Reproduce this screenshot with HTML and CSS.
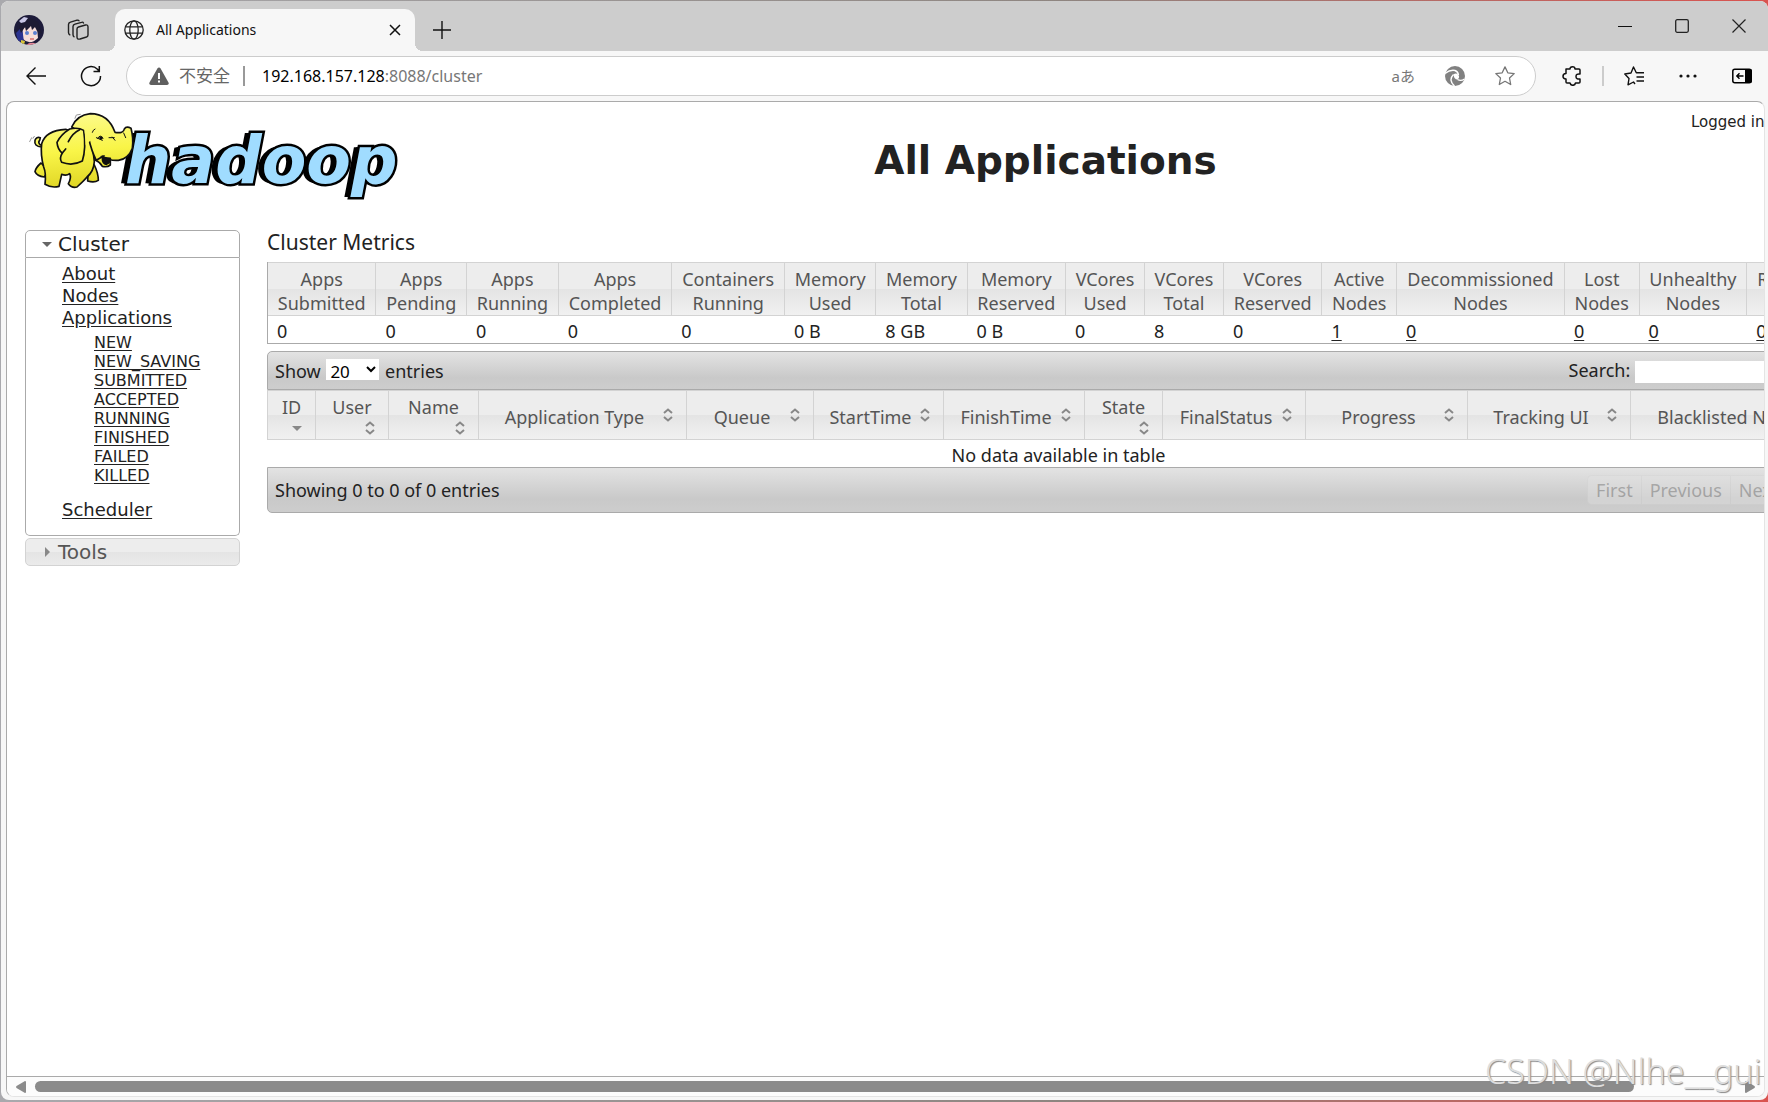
FILE: index.html
```html
<!DOCTYPE html>
<html lang="en">
<head>
    <meta charset="UTF-8" />
    <meta name="viewport" content="width=device-width, initial-scale=1" />
    <title>All Applications</title>
    <link rel="stylesheet" href="styles.css">
</head>
<body>
<div class="window">
    <div class="tabbar">
        <svg class="avatar" viewBox="0 0 30 30">
            <clipPath id="face"><circle cx="15" cy="15" r="15"/></clipPath>
            <g clip-path="url(#face)">
                <rect width="30" height="30" fill="#1d1b3a"/>
                <path d="M8 14Q15 8 23 13L24 23Q16 31 9 24Z" fill="#f6ddd9"/>
                <path d="M2 18L8 12L10 27L4 26Z" fill="#2b3390"/>
                <path d="M7 5Q15 1 24 7L28 19L23 16L21 12L18 15L17 11L12 16L11 12L7 18L5 12Z" fill="#1d1b33"/>
                <path d="M5 6L10 2L14 3L11 7L7 8Z" fill="#c9c7e6"/>
                <circle cx="13" cy="18" r="2" fill="#5b7fd0"/>
                <circle cx="21" cy="18" r="2" fill="#5b7fd0"/>
                <path d="M16 24h4" stroke="#d86a6a" stroke-width="1.4"/>
                <path d="M7 25l4 1l-1 4H7z" fill="#d8c43a"/>
                <path d="M12 30q5-4 11-1v2H12z" fill="#e88a9a"/>
            </g>
        </svg>
        <button class="icon-btn workspaces" aria-label="Workspaces">
            <svg width="22" height="22" viewBox="0 0 22 22" fill="none" stroke="#222" stroke-width="1.4" stroke-linejoin="round" stroke-linecap="round">
                <path d="M11.5 8L18.5 6Q21 5.500 21 8V16Q21 17.500 19.500 18L13 20Q10 20.700 10 18V10Q10 8.500 11.500 8Z"/>
                <path d="M16.500 4Q16 2.800 14.500 3.300L8 5.200Q6 5.800 6 7.500V15.500Q6 17 7 17.800"/>
                <path d="M12 1.800Q11.500 .8 10 1.200L3.500 3.200Q1.500 3.800 1.500 5.500V13.500Q1.500 15 2.800 15.800"/>
            </svg>
        </button>
        <div class="tab">
            <svg width="20" height="20" viewBox="0 0 20 20" fill="none" stroke="#222" stroke-width="1.3">
                <circle cx="10" cy="10" r="9.200"/>
                <ellipse cx="10" cy="10" rx="4.200" ry="9.200"/>
                <path d="M1.500 6.800H18.500M1.500 13.200H18.500"/>
            </svg>
            <span class="tab-title">All Applications</span>
            <button class="icon-btn" aria-label="Close tab">
                <svg width="12" height="12" viewBox="0 0 12 12" stroke="#111" stroke-width="1.500"><path d="M1 1L11 11M11 1L1 11"/></svg>
            </button>
        </div>
        <button class="icon-btn new-tab" aria-label="New tab">
            <svg width="18" height="18" viewBox="0 0 18 18" stroke="#111" stroke-width="1.400"><path d="M9 0V18M0 9H18"/></svg>
        </button>
        <div class="caption-buttons">
            <button class="icon-btn" aria-label="Minimize"><svg width="14" height="14" viewBox="0 0 14 14" stroke="#111"><path d="M0 7.500H14"/></svg></button>
            <button class="icon-btn" aria-label="Maximize"><svg width="14" height="14" viewBox="0 0 14 14" stroke="#222" fill="none" stroke-width="1.300"><rect x=".7" y=".7" width="12.600" height="12.600" rx="1.500"/></svg></button>
            <button class="icon-btn" aria-label="Close"><svg width="14" height="14" viewBox="0 0 14 14" stroke="#222" stroke-width="1.200"><path d="M.5 .5L13.500 13.500M13.500 .5L.5 13.500"/></svg></button>
        </div>
    </div>

    <div class="toolbar">
        <button class="icon-btn" aria-label="Back">
            <svg width="20" height="20" viewBox="0 0 20 20" fill="none" stroke="#111" stroke-width="1.400"><path d="M20 10H1M9.500 1.500L1 10L9.500 18.500"/></svg>
        </button>
        <button class="icon-btn refresh" aria-label="Refresh">
            <svg width="22" height="22" viewBox="0 0 22 22" fill="none" stroke="#111" stroke-width="1.500"><path d="M20.500 11A9.500 9.500 0 1 1 17.500 4.200L19 6M19.300 1V6.500H13.500"/></svg>
        </button>
        <div class="address">
            <svg width="20" height="18" viewBox="0 0 20 18"><path d="M10 .5Q11 .5 11.600 1.500L19.500 15.500Q20.300 18 18 18H2Q-.3 18 .5 15.500L8.400 1.500Q9 .5 10 .5Z" fill="#5f5f5f"/><path d="M10 6V12M10 13.500V15.500" stroke="#fff" stroke-width="2"/></svg>
            <span class="insecure">不安全</span>
            <span class="divider"></span>
            <span class="url">192.168.157.128<span class="path">:8088/cluster</span></span>
            <div class="address-icons">
                <span class="translate">aあ</span>
                <svg width="20" height="20" viewBox="0 0 20 20">
                    <circle cx="10" cy="10" r="10" fill="#818181"/>
                    <path d="M8.500 8.500Q11 6.500 13.500 9Q15 11.500 12.500 13.500Q9 13.500 8.500 8.500Z" fill="#fff"/>
                    <g fill="none" stroke="#fff" stroke-width="1.400">
                        <path d="M0 7.500Q5 3.500 10 4.500Q13 5.500 13.500 9"/>
                        <path d="M19.500 13Q16 15.500 12.500 13.500"/>
                        <path d="M9.500 20Q3 14 8.500 8.500"/>
                    </g>
                </svg>
                <svg width="20" height="20" viewBox="0 0 20 20" fill="none" stroke="#777" stroke-width="1.300" stroke-linejoin="round"><path d="M10 .9L12.800 6.800L19.200 7.600L14.500 12L15.700 18.500L10 15.300L4.300 18.500L5.500 12L.8 7.600L7.200 6.800Z"/></svg>
            </div>
        </div>
        <div class="toolbar-icons">
            <button class="icon-btn" aria-label="Extensions">
                <svg width="20" height="20" viewBox="0 0 20 20" fill="none" stroke="#111" stroke-width="1.500" stroke-linejoin="round"><path d="M4 3H8Q8 .8 10.500 .8T13 3H17Q18 3 18 4V8Q14 7.500 14 10.500T18 13V16Q18 17 17 17H13.500Q13 19.300 10.800 19.300T8 17H5Q4 17 4 16V13Q1 13 1 10.300T4 7.500Z"/></svg>
            </button>
            <span class="divider light"></span>
            <button class="icon-btn" aria-label="Favorites">
                <svg width="20" height="20" viewBox="0 0 20 20" fill="none" stroke="#111" stroke-width="1.400" stroke-linejoin="round"><path d="M11 18L9.500 16L4 18.800L5 12.500L.8 8L7 7L9.500 1L12.300 6.800H20M12.500 11H20M12.500 15H20"/></svg>
            </button>
            <button class="icon-btn wide" aria-label="Settings and more">
                <svg width="18" height="4" viewBox="0 0 18 4" fill="#111"><circle cx="2" cy="2" r="1.600"/><circle cx="9" cy="2" r="1.600"/><circle cx="16" cy="2" r="1.600"/></svg>
            </button>
            <button class="icon-btn wide" aria-label="Sidebar">
                <svg width="20" height="16" viewBox="0 0 20 16"><rect x=".8" y="1.300" width="18.400" height="13.400" rx="2" fill="none" stroke="#000" stroke-width="1.500"/><path d="M13 1H18Q20 1 20 3V13Q20 15 18 15H13Z"/><path d="M11.500 8H5M7.500 5.300L4.800 8L7.500 10.700" fill="none" stroke="#000" stroke-width="1.400"/></svg>
            </button>
        </div>
    </div>

    <div class="viewport">
        <div class="page">
            <div class="header">
                <a class="logo" href="#">
                    <svg width="112" height="86" viewBox="0 0 336 258">
                        <defs>
                            <linearGradient id="skin" gradientUnits="userSpaceOnUse" x1="120" y1="30" x2="140" y2="250">
                                <stop offset="0" stop-color="#fcfa8c"/>
                                <stop offset=".5" stop-color="#f9f548"/>
                                <stop offset="1" stop-color="#dfd524"/>
                            </linearGradient>
                        </defs>
                        <g fill="url(#skin)" stroke="#111" stroke-width="5" stroke-linejoin="round" stroke-linecap="round">
                            <path d="M50 126Q26 124 30 106Q34 94 46 98L44 106Q38 112 46 120L56 118Z"/>
                            <path d="M48 174Q32 188 30 200Q36 214 58 216L70 196Z"/>
                            <path d="M208 180Q220 205 220 226Q208 234 188 228L190 190Z"/>
                            <path d="M122 73Q62 76 50 116Q46 150 56 186Q64 205 60 238Q80 250 102 244L110 208Q124 214 134 206Q140 218 130 236Q140 250 156 246Q178 226 186 216Q206 200 208 170L200 100Z"/>
                            <path d="M206 150L212 166Q226 172 232 184Q246 188 256 180V156Z"/>
                            <path d="M140 66Q156 30 196 26Q250 26 270 82Q296 86 298 72Q304 62 318 70Q326 100 322 130Q310 162 280 166Q254 168 234 154L214 166Q200 140 190 96Z" />
                            <path d="M176 76Q160 66 134 72Q108 88 96 112Q98 134 112 144Q102 160 110 172Q142 184 172 168Q184 130 176 76Z"/>
                            <path d="M164 74Q142 84 130 110M112 144L122 132" fill="none"/>
                            <path d="M178 70L204 62L204 100L182 120Z" stroke="none"/>
                            <path d="M232 158Q232 176 244 178Q258 172 256 160Z" fill="#111"/>
                            <path d="M218 100Q226 86 234 100M214 98L232 106M202 82Q204 74 210 72M252 98H268M262 96L270 106M296 84L302 98M228 154L238 152" fill="none" stroke-width="3"/>
                            <circle cx="228" cy="99" r="3" fill="#111"/>
                            <path d="M14 110L20 98M24 100L28 94M150 40L154 30L166 28" fill="none" stroke="#999" stroke-width="3"/>
                        </g>
                    </svg>
                    <span class="logo-name">hadoop</span>
                </a>
                <h1>All Applications</h1>
                <div class="user">Logged in as: dr.who</div>
            </div>

            <div class="columns">
                <div class="nav">
                    <h3 class="nav-head active"><span class="arrow-down"></span>Cluster</h3>
                    <div class="nav-body">
                        <ul>
                            <li><a href="#">About</a></li>
                            <li><a href="#">Nodes</a></li>
                            <li><a href="#">Applications</a>
                                <ul class="states">
                                    <li><a href="#">NEW</a></li>
                                    <li><a href="#">NEW_SAVING</a></li>
                                    <li><a href="#">SUBMITTED</a></li>
                                    <li><a href="#">ACCEPTED</a></li>
                                    <li><a href="#">RUNNING</a></li>
                                    <li><a href="#">FINISHED</a></li>
                                    <li><a href="#">FAILED</a></li>
                                    <li><a href="#">KILLED</a></li>
                                </ul>
                            </li>
                            <li><a href="#">Scheduler</a></li>
                        </ul>
                    </div>
                    <h3 class="nav-head"><span class="arrow-right"></span>Tools</h3>
                </div>

                <div class="content">
                    <h2>Cluster Metrics</h2>
                    <table class="metrics">
                        <thead>
                            <tr>
                                <th>Apps<br>Submitted</th>
                                <th>Apps<br>Pending</th>
                                <th>Apps<br>Running</th>
                                <th>Apps<br>Completed</th>
                                <th>Containers<br>Running</th>
                                <th>Memory<br>Used</th>
                                <th>Memory<br>Total</th>
                                <th>Memory<br>Reserved</th>
                                <th>VCores<br>Used</th>
                                <th>VCores<br>Total</th>
                                <th>VCores<br>Reserved</th>
                                <th>Active<br>Nodes</th>
                                <th>Decommissioned<br>Nodes</th>
                                <th>Lost<br>Nodes</th>
                                <th>Unhealthy<br>Nodes</th>
                                <th>Rebooted<br>Nodes</th>
                            </tr>
                        </thead>
                        <tbody>
                            <tr>
                                <td>0</td>
                                <td>0</td>
                                <td>0</td>
                                <td>0</td>
                                <td>0</td>
                                <td>0 B</td>
                                <td>8 GB</td>
                                <td>0 B</td>
                                <td>0</td>
                                <td>8</td>
                                <td>0</td>
                                <td><a href="#">1</a></td>
                                <td><a href="#">0</a></td>
                                <td><a href="#">0</a></td>
                                <td><a href="#">0</a></td>
                                <td><a href="#">0</a></td>
                            </tr>
                        </tbody>
                    </table>

                    <div class="bar top">
                        <label>Show
                            <select>
                                <option>20</option>
                                <option>40</option>
                                <option>60</option>
                            </select>
                            entries</label>
                        <label>Search: <input type="text"></label>
                    </div>
                    <table class="apps">
                        <colgroup>
                            <col class="c-id"><col class="c-user"><col class="c-name"><col class="c-type"><col class="c-queue"><col class="c-start"><col class="c-finish"><col class="c-state"><col class="c-final"><col class="c-progress"><col class="c-tracking"><col class="c-nodes">
                        </colgroup>
                        <thead>
                            <tr>
                                <th><div class="sort stacked"><span>ID</span><i class="arrow-down"></i></div></th>
                                <th><div class="sort stacked"><span>User</span><svg class="carets" viewBox="0 0 10 14"><path d="M1 5L5 1.500L9 5M1 9L5 12.500L9 9"/></svg></div></th>
                                <th><div class="sort stacked"><span>Name</span><svg class="carets" viewBox="0 0 10 14"><path d="M1 5L5 1.500L9 5M1 9L5 12.500L9 9"/></svg></div></th>
                                <th><div class="sort"><span>Application Type</span><svg class="carets" viewBox="0 0 10 14"><path d="M1 5L5 1.500L9 5M1 9L5 12.500L9 9"/></svg></div></th>
                                <th><div class="sort"><span>Queue</span><svg class="carets" viewBox="0 0 10 14"><path d="M1 5L5 1.500L9 5M1 9L5 12.500L9 9"/></svg></div></th>
                                <th><div class="sort"><span>StartTime</span><svg class="carets" viewBox="0 0 10 14"><path d="M1 5L5 1.500L9 5M1 9L5 12.500L9 9"/></svg></div></th>
                                <th><div class="sort"><span>FinishTime</span><svg class="carets" viewBox="0 0 10 14"><path d="M1 5L5 1.500L9 5M1 9L5 12.500L9 9"/></svg></div></th>
                                <th><div class="sort stacked"><span>State</span><svg class="carets" viewBox="0 0 10 14"><path d="M1 5L5 1.500L9 5M1 9L5 12.500L9 9"/></svg></div></th>
                                <th><div class="sort"><span>FinalStatus</span><svg class="carets" viewBox="0 0 10 14"><path d="M1 5L5 1.500L9 5M1 9L5 12.500L9 9"/></svg></div></th>
                                <th><div class="sort"><span>Progress</span><svg class="carets" viewBox="0 0 10 14"><path d="M1 5L5 1.500L9 5M1 9L5 12.500L9 9"/></svg></div></th>
                                <th><div class="sort"><span>Tracking UI</span><svg class="carets" viewBox="0 0 10 14"><path d="M1 5L5 1.500L9 5M1 9L5 12.500L9 9"/></svg></div></th>
                                <th><div class="sort"><span>Blacklisted Nodes</span><svg class="carets" viewBox="0 0 10 14"><path d="M1 5L5 1.500L9 5M1 9L5 12.500L9 9"/></svg></div></th>
                            </tr>
                        </thead>
                        <tbody>
                            <tr><td colspan="12">No data available in table</td></tr>
                        </tbody>
                    </table>
                    <div class="bar bottom">
                        <span>Showing 0 to 0 of 0 entries</span>
                        <div class="pager">
                            <button disabled>First</button>
                            <button disabled>Previous</button>
                            <button disabled>Next</button>
                            <button disabled>Last</button>
                        </div>
                    </div>
                </div>
            </div>
        </div>
        <div class="scrollbar">
            <svg width="10" height="12" viewBox="0 0 10 12" fill="#8b8b8b"><path d="M9 0Q10 0 10 1V11Q10 12 9 12L.5 7Q-.3 6 .5 5Z"/></svg>
            <div class="track"><div class="thumb"></div></div>
            <svg width="10" height="12" viewBox="0 0 10 12" fill="#8b8b8b"><path d="M1 0Q0 0 0 1V11Q0 12 1 12L9.500 7Q10.300 6 9.500 5Z"/></svg>
        </div>
        <div class="watermark">CSDN @Nlhe__gui</div>
    </div>
</div>
</body>
</html>
```

FILE: styles.css
```css
* {
  box-sizing: border-box;
}
body {
  margin: 0;
  padding: 1px 0 2px 1px;
  height: 100vh;
  overflow: hidden;
  background: linear-gradient(90deg, #a9a9ad, #8e8580 60%, #d9534f);
  font-family: "Noto Sans", "Noto Sans CJK SC", sans-serif;
  font-size: 18px;
  line-height: 24px;
  color: #222;
}
a {
  color: #222;
  text-underline-offset: 2px;
}
.window {
  display: flex;
  flex-direction: column;
  height: 100%;
  background: #f7f7f7;
  border-radius: 8px;
  overflow: hidden;
}
.icon-btn {
  display: flex;
  align-items: center;
  justify-content: center;
  padding: 0;
  border: none;
  background: none;
}

/* tab strip */
.tabbar {
  display: flex;
  align-items: center;
  height: 50px;
  background: #cdcdcd;
}
.avatar {
  width: 30px;
  height: 30px;
  margin: 8px 23px 0 13px;
}
.workspaces {
  margin: 8px 26px 0 0;
}
.tab {
  position: relative;
  display: flex;
  align-items: center;
  align-self: flex-end;
  width: 300px;
  height: 42px;
  padding: 0 14px 0 9px;
  background: #f7f7f7;
  border-radius: 10px 10px 0 0;
}
.tab::before, .tab::after {
  content: "";
  position: absolute;
  bottom: 0;
  width: 8px;
  height: 8px;
}
.tab::before {
  left: -8px;
  background: radial-gradient(circle at 0 0, #cdcdcd 8px, #f7f7f7 8px);
}
.tab::after {
  right: -8px;
  background: radial-gradient(circle at 100% 0, #cdcdcd 8px, #f7f7f7 8px);
}
.tab-title {
  flex: 1;
  margin-left: 12px;
  font-size: 14px;
  color: #111;
}
.new-tab {
  margin: 8px 0 0 18px;
}
.caption-buttons {
  display: flex;
  margin-left: auto;
  padding-right: 1px;
}
.caption-buttons .icon-btn {
  width: 57px;
  height: 48px;
}

/* toolbar */
.toolbar {
  display: flex;
  align-items: center;
  height: 50px;
  padding: 0 16px 0 25px;
}
.refresh {
  margin: 0 24px 0 34px;
}
.address {
  display: flex;
  flex: 1;
  align-items: center;
  height: 40px;
  padding: 0 20px 0 22px;
  background: #fff;
  border: 1px solid #ccc;
  border-radius: 20px;
}
.insecure {
  margin: 0 13px 0 10px;
  font-size: 17px;
  color: #666;
}
.divider {
  width: 2px;
  height: 20px;
  background: #999;
}
.divider.light {
  background: #ccc;
}
.url {
  margin-left: 17px;
  font-size: 16px;
  color: #000;
}
.path {
  color: #777;
}
.address-icons {
  display: flex;
  align-items: center;
  gap: 30px;
  margin-left: auto;
}
.translate {
  font-size: 15px;
  line-height: 20px;
  color: #777;
}
.toolbar-icons {
  display: flex;
  align-items: center;
  gap: 20px;
  margin-left: 26px;
}
.wide {
  margin-left: 15px;
}

/* browser viewport */
.viewport {
  position: relative;
  display: flex;
  flex: 1;
  flex-direction: column;
  margin: 0 3px 3px 5px;
  background: #fff;
  border: 1px solid #aaa;
  border-right-color: #e4e4e4;
  border-bottom-color: #e4e4e4;
  border-radius: 8px;
  overflow: hidden;
}
.page {
  flex: 1;
  overflow: hidden;
  padding: 0 18px;
}
.scrollbar {
  display: flex;
  align-items: center;
  gap: 9px;
  height: 20px;
  padding: 0 9px;
  background: #fcfcfc;
  border-top: 1px solid #aaa;
}
.track {
  flex: 1;
}
.thumb {
  width: 94%;
  height: 11px;
  background: #8b8b8b;
  border-radius: 6px;
}
.watermark {
  position: absolute;
  left: calc(100% - 279px);
  bottom: 3px;
  font-size: 34px;
  line-height: 44px;
  font-weight: 300;
  white-space: nowrap;
  color: #ddd;
  text-shadow: 1px 1px 1px #888;
}

/* page header */
.header {
  display: flex;
  width: 1826px;
  height: 128px;
  font-family: "DejaVu Sans", sans-serif;
}
.logo {
  display: flex;
  width: 375px;
  padding-top: 3px;
  text-decoration: none;
}
.logo svg {
  flex: none;
  z-index: 1;
}
.logo-name {
  margin: 20px 0 0 -12px;
  font-size: 65px;
  line-height: 72px;
  font-weight: bold;
  font-style: italic;
  color: #a0dcff;
  paint-order: stroke;
  -webkit-text-stroke: 5px #000;
  text-shadow: -2px 0 #000, -4px 0 #000, -6px 0 #000;
}
h1 {
  flex: 1;
  margin: 35px 0 0;
  font-size: 39px;
  line-height: 48px;
  text-align: center;
}
.user {
  width: 160px;
  padding-top: 8px;
  font-size: 15px;
  white-space: nowrap;
}

/* navigation */
.columns {
  display: flex;
  gap: 27px;
}
.nav {
  flex: none;
  width: 215px;
  font-family: "DejaVu Sans", sans-serif;
}
.nav-head {
  display: flex;
  align-items: center;
  height: 28px;
  margin: 2px 0 0;
  padding-left: 16px;
  border: 1px solid #d3d3d3;
  border-radius: 5px;
  background: linear-gradient(#ededed 50%, #e4e4e4 50%, #ebebeb);
  font-size: 20px;
  font-weight: normal;
  color: #555;
}
.nav-head.active {
  margin: 0;
  border-color: #aaa;
  border-radius: 5px 5px 0 0;
  background: #fff;
  color: #222;
}
.arrow-down {
  width: 10px;
  margin-right: 6px;
  border: 5px solid transparent;
  border-top-color: #666;
  border-bottom-width: 0;
}
.arrow-right {
  margin: 0 8px 0 3px;
  border: 5px solid transparent;
  border-left-color: #888;
  border-right-width: 0;
}
.nav-body {
  padding: 5px 0 14px 36px;
  border: 1px solid #aaa;
  border-top: none;
  border-radius: 0 0 5px 5px;
}
.nav ul {
  margin: 0;
  padding: 0;
  list-style: none;
  line-height: 22px;
}
.nav .states {
  margin: 4px 0 14px 32px;
  font-size: 16px;
  line-height: 19px;
}

/* tables */
.content {
  flex: none;
  width: 1583px;
}
h2 {
  margin: 0 0 8px;
  font-size: 21px;
  line-height: 24px;
  font-weight: normal;
}
table {
  width: 100%;
  border-collapse: separate;
  border-spacing: 0;
}
th {
  border: 1px solid #d3d3d3;
  border-left: none;
  background: linear-gradient(#ededed 50%, #e4e4e4 50%, #f1f1f1);
  font-weight: normal;
  color: #555;
}
th:first-child {
  border-left: 1px solid #d3d3d3;
}
.metrics {
  margin-bottom: 7px;
  border-bottom: 1px solid #aaa;
  border-left: 1px solid #aaa;
}
.metrics th:first-child {
  border-left: none;
}
.metrics th {
  padding: 4px 9px 0;
}
.metrics td {
  padding: 3px 9px 0;
}
.bar {
  display: flex;
  align-items: center;
  justify-content: space-between;
  padding: 0 7px;
  border: 1px solid #aaa;
  background: linear-gradient(#e3e3e3, #c9c9c9 70%, #cdcdcd);
}
.bar.top {
  height: 39px;
  border-radius: 5px 5px 0 0;
}
.bar.bottom {
  height: 46px;
  border-radius: 0 0 5px 5px;
}
.bar select {
  width: 53px;
  height: 21px;
  margin: 0 1px;
  border: none;
  background: #fff;
  font: 17px "Noto Sans", sans-serif;
  line-height: 20px;
}
.bar input {
  width: 207px;
  height: 22px;
  border: none;
}
.apps {
  table-layout: fixed;
}
.apps th {
  height: 50px;
  padding: 0 10px;
}
.apps td {
  padding: 3px 0 0;
  text-align: center;
}
.c-id { width: 49px; }
.c-user { width: 73px; }
.c-name { width: 90px; }
.c-type { width: 208px; }
.c-queue { width: 127px; }
.c-start { width: 130px; }
.c-finish { width: 141px; }
.c-state { width: 78px; }
.c-final { width: 143px; }
.c-progress { width: 162px; }
.c-tracking { width: 163px; }
.c-nodes { width: 219px; }
.sort {
  display: flex;
  align-items: center;
}
.sort span {
  flex: 1;
  padding-top: 4px;
  white-space: nowrap;
}
.carets {
  width: 10px;
  height: 14px;
  margin: 0 3px;
  fill: none;
  stroke: #888;
  stroke-width: 2;
}
.stacked {
  flex-direction: column;
  align-items: stretch;
  gap: 2px;
}
.stacked span {
  padding-top: 0;
}
.stacked .carets {
  align-self: flex-end;
}
.stacked .arrow-down {
  align-self: flex-end;
  margin: 5px 3px 4px;
  border-top-color: #888;
}
.pager {
  display: flex;
  padding-right: 4px;
}
.pager button {
  height: 30px;
  padding: 0 8px;
  border: 1px solid #d3d3d3;
  border-right: none;
  background: #e6e6e6;
  font: 18px "Noto Sans", sans-serif;
  color: #555;
  opacity: 0.35;
}
.pager button:first-child {
  border-radius: 5px 0 0 5px;
}
```
